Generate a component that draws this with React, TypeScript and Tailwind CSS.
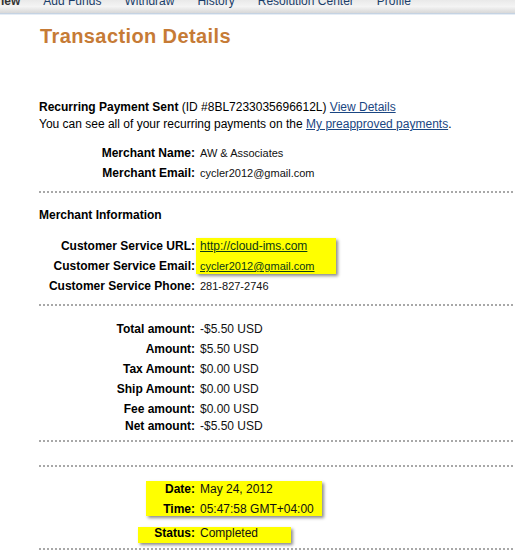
import React from "react";

const navItems = ["Add Funds", "Withdraw", "History", "Resolution Center", "Profile"];

function Row({
  label,
  children,
  size = "text-[11px]",
  className = "",
}: {
  label: string;
  children: React.ReactNode;
  size?: string;
  className?: string;
}) {
  return (
    <div className={`relative flex h-[20px] items-baseline leading-[20px] ${className}`}>
      <div className="w-[156px] shrink-0 text-right text-[12px] font-bold text-black">{label}</div>
      <div className={`ml-[5px] text-[#111] ${size}`}>{children}</div>
    </div>
  );
}

function Dots({ className = "" }: { className?: string }) {
  return <div className={`border-t-2 border-dotted border-[#a8a8a8] ${className}`} />;
}

export default function App() {
  return (
    <div className="min-h-[555px] w-[515px] overflow-hidden bg-white font-['Liberation_Sans',Arial,sans-serif] text-black">
      {/* top tabs, cut off by the screenshot */}
      <div className="h-[14px] overflow-hidden border-b border-[#c5d3e3] bg-gradient-to-b from-[#e9e9e9] via-[#f4f4f4] to-[#d8d8d8] shadow-[0_1px_0_#e6edf5]">
        <div className="-mt-[5px] flex gap-[23px] pl-[1px] text-[12px] leading-[12px] text-[#1b3e6a]">
          <span className="font-bold text-[#333]">iew</span>
          {navItems.map((n) => (
            <span key={n}>{n}</span>
          ))}
        </div>
      </div>

      <div className="pl-[39px] pr-[2px]">
        <h1 className="mt-[10px] pl-[1px] text-[20px] font-bold leading-[24px] tracking-[0.4px] text-[#c67b36]">
          Transaction Details
        </h1>

        <div className="mt-[51px] text-[12px] leading-[17px]">
          <p>
            <b>Recurring Payment Sent</b> (ID #8BL7233035696612L){" "}
            <a href="#" className="text-[#1a4682] underline">
              View Details
            </a>
          </p>
          <p>
            You can see all of your recurring payments on the{" "}
            <a href="#" className="text-[#1a4682] underline">
              My preapproved payments
            </a>
            .
          </p>
        </div>

        <div className="mt-[10px]">
          <Row label="Merchant Name:">AW &amp; Associates</Row>
          <Row label="Merchant Email:">cycler2012@gmail.com</Row>
        </div>

        <Dots className="mt-[8px]" />

        <h2 className="mt-[12px] text-[12px] font-bold leading-[20px]">Merchant Information</h2>

        <div className="relative mt-[11px]">
          <span className="absolute left-[157px] top-[1.5px] h-[36px] w-[140px] bg-[#ffff00] shadow-[2px_2px_3px_rgba(0,0,0,0.45)]" />
          <Row label="Customer Service URL:" size="text-[12px]">
            <a href="#" className="text-[#0d3a16] underline">
              http://cloud-ims.com
            </a>
          </Row>
          <Row label="Customer Service Email:">
            <a href="#" className="text-[#0d3a16] underline">
              cycler2012@gmail.com
            </a>
          </Row>
          <Row label="Customer Service Phone:">281-827-2746</Row>
        </div>

        <Dots className="mt-[8px]" />

        <div className="mt-[13px]">
          <Row label="Total amount:" size="text-[12px]">-$5.50 USD</Row>
          <Row label="Amount:" size="text-[12px]">$5.50 USD</Row>
          <Row label="Tax Amount:" size="text-[12px]">$0.00 USD</Row>
          <Row label="Ship Amount:" size="text-[12px]">$0.00 USD</Row>
          <Row label="Fee amount:" size="text-[12px]">$0.00 USD</Row>
          <Row label="Net amount:" size="text-[12px]" className="-mt-[3px]">
            -$5.50 USD
          </Row>
        </div>

        <Dots className="mt-[4px]" />
        <Dots className="mt-[23px]" />

        <div className="relative mt-[12px]">
          <span className="absolute left-[107px] top-[1.7px] h-[35px] w-[176px] bg-[#ffff00] shadow-[2px_2px_3px_rgba(0,0,0,0.45)]" />
          <Row label="Date:" size="text-[12px]">May 24, 2012</Row>
          <Row label="Time:" size="text-[12px]">05:47:58 GMT+04:00</Row>
        </div>

        <div className="relative mt-[4px]">
          <span className="absolute left-[99px] top-[3.7px] h-[16px] w-[153px] bg-[#ffff00] shadow-[2px_2px_3px_rgba(0,0,0,0.45)]" />
          <Row label="Status:" size="text-[12px]">Completed</Row>
        </div>

        <Dots className="mt-[5px]" />
      </div>
    </div>
  );
}
